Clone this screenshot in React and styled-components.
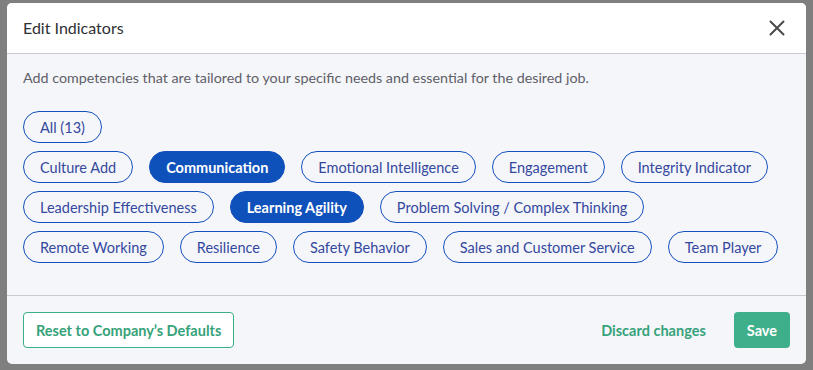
import React from "react";
import styled, { createGlobalStyle } from "styled-components";

const GlobalStyle = createGlobalStyle`
    html, body {
        margin: 0;
        padding: 0;
        height: 100%;
    }
    body {
        font-family: Lato, "Noto Sans", Arial, sans-serif;
        background: #808080;
    }
`;

const indicators = [
    { name: "Culture Add" },
    { name: "Communication", active: true },
    { name: "Emotional Intelligence" },
    { name: "Engagement" },
    { name: "Integrity Indicator" },
    { name: "Leadership Effectiveness" },
    { name: "Learning Agility", active: true },
    { name: "Problem Solving / Complex Thinking" },
    { name: "Remote Working" },
    { name: "Resilience" },
    { name: "Safety Behavior" },
    { name: "Sales and Customer Service" },
    { name: "Team Player" },
];

const CloseIcon = () => (
    <svg width="16" height="16" viewBox="0 0 16 16" fill="none">
        <path d="M1.5 1.5L14.5 14.5M14.5 1.5L1.5 14.5" stroke="#4a4a4a" strokeWidth="2" strokeLinecap="round" />
    </svg>
);

const App = () => {
    return (
        <>
            <GlobalStyle />
            <Overlay>
                <Modal>
                    <Header>
                        <Title>Edit Indicators</Title>
                        <CloseButton aria-label="Close">
                            <CloseIcon />
                        </CloseButton>
                    </Header>
                    <Body>
                        <Description>
                            Add competencies that are tailored to your specific needs and essential for the desired job.
                        </Description>
                        <ChipRow>
                            <Chip>All (13)</Chip>
                        </ChipRow>
                        <ChipRow>
                            {indicators.map((item) => (
                                <Chip key={item.name} $active={item.active}>
                                    {item.name}
                                </Chip>
                            ))}
                        </ChipRow>
                    </Body>
                    <Footer>
                        <OutlineButton>Reset to Company’s Defaults</OutlineButton>
                        <FooterActions>
                            <LinkButton>Discard changes</LinkButton>
                            <SaveButton>Save</SaveButton>
                        </FooterActions>
                    </Footer>
                </Modal>
            </Overlay>
        </>
    );
};

const Overlay = styled.div`
    display: flex;
    justify-content: center;
    align-items: flex-start;
    min-height: 100vh;
    padding-top: 3px;
    box-sizing: border-box;
    background: #7f7f7f;
`;

const Modal = styled.div`
    width: 799px;
    background: #f5f6fa;
    border-radius: 5px;
    overflow: hidden;
`;

const Header = styled.div`
    display: flex;
    align-items: center;
    justify-content: space-between;
    height: 50px;
    padding: 0 21px 0 16px;
    background: #ffffff;
    border-bottom: 1px solid #c9cacf;
`;

const Title = styled.h3`
    margin: 0 0 1px 0;
    font-size: 16px;
    font-weight: 400;
    color: #2f2f35;
`;

const CloseButton = styled.button`
    display: flex;
    align-items: center;
    justify-content: center;
    padding: 0;
    border: none;
    background: none;
    cursor: pointer;
`;

const Body = styled.div`
    display: flex;
    flex-direction: column;
    gap: 8px;
    padding: 14px 16px 32px 16px;
    border-bottom: 1px solid #c9cacf;
`;

const Description = styled.p`
    margin: 0 0 15px 0;
    font-size: 14.3px;
    line-height: 20px;
    color: #5f6068;
`;

const ChipRow = styled.div`
    display: flex;
    flex-wrap: wrap;
    gap: 8px 16px;
`;

const Chip = styled.button`
    height: 32px;
    padding: 0 16px;
    border-radius: 16px;
    border: 1px solid #1450bc;
    background: ${(p) => (p.$active ? "#0f51ba" : "transparent")};
    color: ${(p) => (p.$active ? "#ffffff" : "#34489e")};
    font-family: inherit;
    font-size: 14.5px;
    font-weight: ${(p) => (p.$active ? 700 : 400)};
    cursor: pointer;
    white-space: nowrap;
`;

const Footer = styled.div`
    display: flex;
    align-items: center;
    justify-content: space-between;
    padding: 16px;
`;

const FooterActions = styled.div`
    display: flex;
    align-items: center;
    gap: 28px;
`;

const OutlineButton = styled.button`
    height: 36px;
    padding: 0 12px;
    border: 1px solid #3aae85;
    border-radius: 4px;
    background: #ffffff;
    color: #36a27a;
    font-family: inherit;
    font-size: 14.5px;
    font-weight: 700;
    cursor: pointer;
`;

const LinkButton = styled.button`
    padding: 0;
    border: none;
    background: none;
    color: #36a27a;
    font-family: inherit;
    font-size: 14.5px;
    font-weight: 700;
    cursor: pointer;
`;

const SaveButton = styled.button`
    height: 36px;
    padding: 0 13px;
    border: none;
    border-radius: 4px;
    background: #3eaf8a;
    color: #ffffff;
    font-family: inherit;
    font-size: 14.5px;
    font-weight: 700;
    cursor: pointer;
`;

export default App;
